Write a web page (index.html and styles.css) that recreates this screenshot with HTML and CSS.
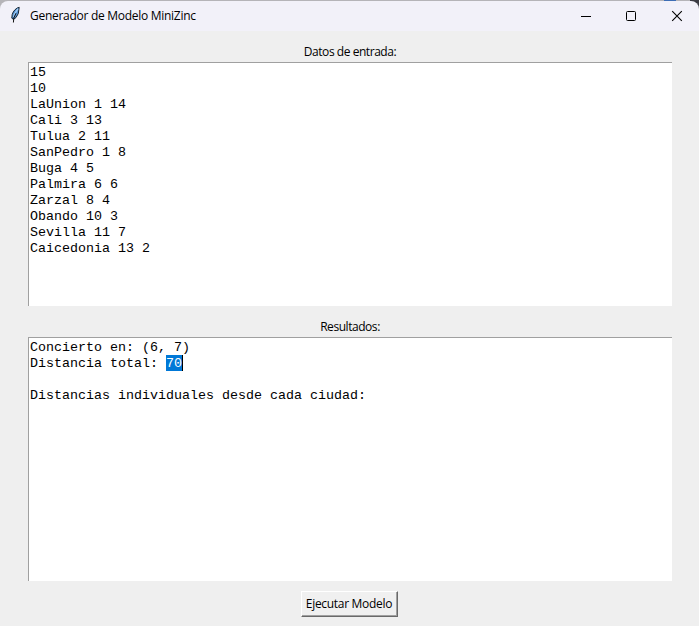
FILE: index.html
```html
<!DOCTYPE html>
<html lang="es">
<head>
<meta charset="utf-8">
<title>Generador de Modelo MiniZinc</title>
<link rel="stylesheet" href="styles.css">
</head>
<body>
<div class="window">
  <header class="titlebar">
    <svg class="feather" width="12" height="18" viewBox="0 0 12 18">
      <path d="M10.2 1.3C7 2 4.2 5 3.2 8.5L2.8 12.2L4.5 13.4L7 11.5L9.3 7.5Z" fill="#5594d8" stroke="#172431" stroke-width="1"/>
      <path d="M9 2.6L5.4 8.3L4.6 11" fill="none" stroke="#a9d0f5" stroke-width="1.2"/>
      <path d="M7 7.2L4.8 12L4.4 16.5" fill="none" stroke="#111" stroke-width="1"/>
    </svg>
    <h1 class="title">Generador de Modelo MiniZinc</h1>
    <div class="controls">
      <svg width="46" height="30" viewBox="0 0 46 30"><path d="M18 15.5H28" stroke="#000"/></svg>
      <svg width="46" height="30" viewBox="0 0 46 30"><rect x="17.5" y="10.5" width="9" height="9" rx="1" fill="none" stroke="#000"/></svg>
      <svg width="46" height="30" viewBox="0 0 46 30"><path d="M17.2 10.2L26.8 19.8M26.8 10.2L17.2 19.8" stroke="#000" stroke-width="1.1"/></svg>
    </div>
  </header>
  <main class="content">
    <div class="label label-input">Datos de entrada:</div>
    <pre class="text">15
10
LaUnion 1 14
Cali 3 13
Tulua 2 11
SanPedro 1 8
Buga 4 5
Palmira 6 6
Zarzal 8 4
Obando 10 3
Sevilla 11 7
Caicedonia 13 2</pre>
    <div class="label label-results">Resultados:</div>
    <div class="text">
      <div class="line">Concierto en: (6, 7)</div>
      <div class="line selection-line"><span>Distancia total: </span><span class="selected">70</span></div>
      <div class="line"></div>
      <div class="line">Distancias individuales desde cada ciudad:</div>
    </div>
    <button class="run" type="button">Ejecutar Modelo</button>
  </main>
</div>
</body>
</html>
```
FILE: styles.css
```css
* { box-sizing: border-box; }
body {
  margin: 0;
  height: 626px;
  overflow: hidden;
  background: linear-gradient(90deg, #b5b4b8 0 664px, #3d6db5 664px 676px, #b5b4b8 676px 690px, #3c3c44 690px);
  font-family: "Open Sans", "Noto Sans", sans-serif;
  font-size: 12px;
  color: #000;
}
.window {
  height: 626px;
  padding-top: 1px;
}
.titlebar {
  height: 30px;
  display: flex;
  align-items: center;
  padding-left: 9px;
  background: #f2f1f9;
  border-radius: 8px 8px 0 0;
}
.feather { flex: none; margin-top: -2px; }
.title {
  flex: 1;
  margin: -1px 0 0 9px;
  font-size: 12px;
  font-weight: 400;
  letter-spacing: -0.28px;
  white-space: nowrap;
}
.controls { display: flex; margin-right: -2px; }
.controls svg { display: block; margin-top: -1px; }
.content {
  height: 595px;
  padding: 11px 27px 0 28px;
  background: #efefef;
  display: flex;
  flex-direction: column;
}
.label {
  height: 20px;
  line-height: 20px;
  text-align: center;
  letter-spacing: -0.45px;
}
.label-results { margin-top: 11px; }
.text {
  margin: 0;
  height: 244px;
  padding: 2px 1px 0;
  border-top: 1px solid #a0a0a0;
  border-left: 1px solid #a0a0a0;
  background: #fff;
  font: 13.33px/16px "Liberation Mono", monospace;
}
.line {
  height: 16px;
  white-space: pre;
}
.selection-line { display: flex; }
.selected {
  margin-top: -1px;
  padding-top: 1px;
  height: 16px;
  background: #0078d7;
  color: #fff;
  box-shadow: 1px 0 #000;
}
.run {
  align-self: center;
  position: relative;
  left: -1px;
  width: 97px;
  height: 26px;
  margin-top: 10px;
  padding: 0;
  border: 1px solid;
  border-color: #fff #696969 #696969 #fff;
  box-shadow: inset -1px -1px #a0a0a0;
  background: #f0f0f0;
  color: #000;
  font: 12px/22px "Open Sans", "Noto Sans", sans-serif;
  letter-spacing: -0.3px;
  white-space: nowrap;
}
```
